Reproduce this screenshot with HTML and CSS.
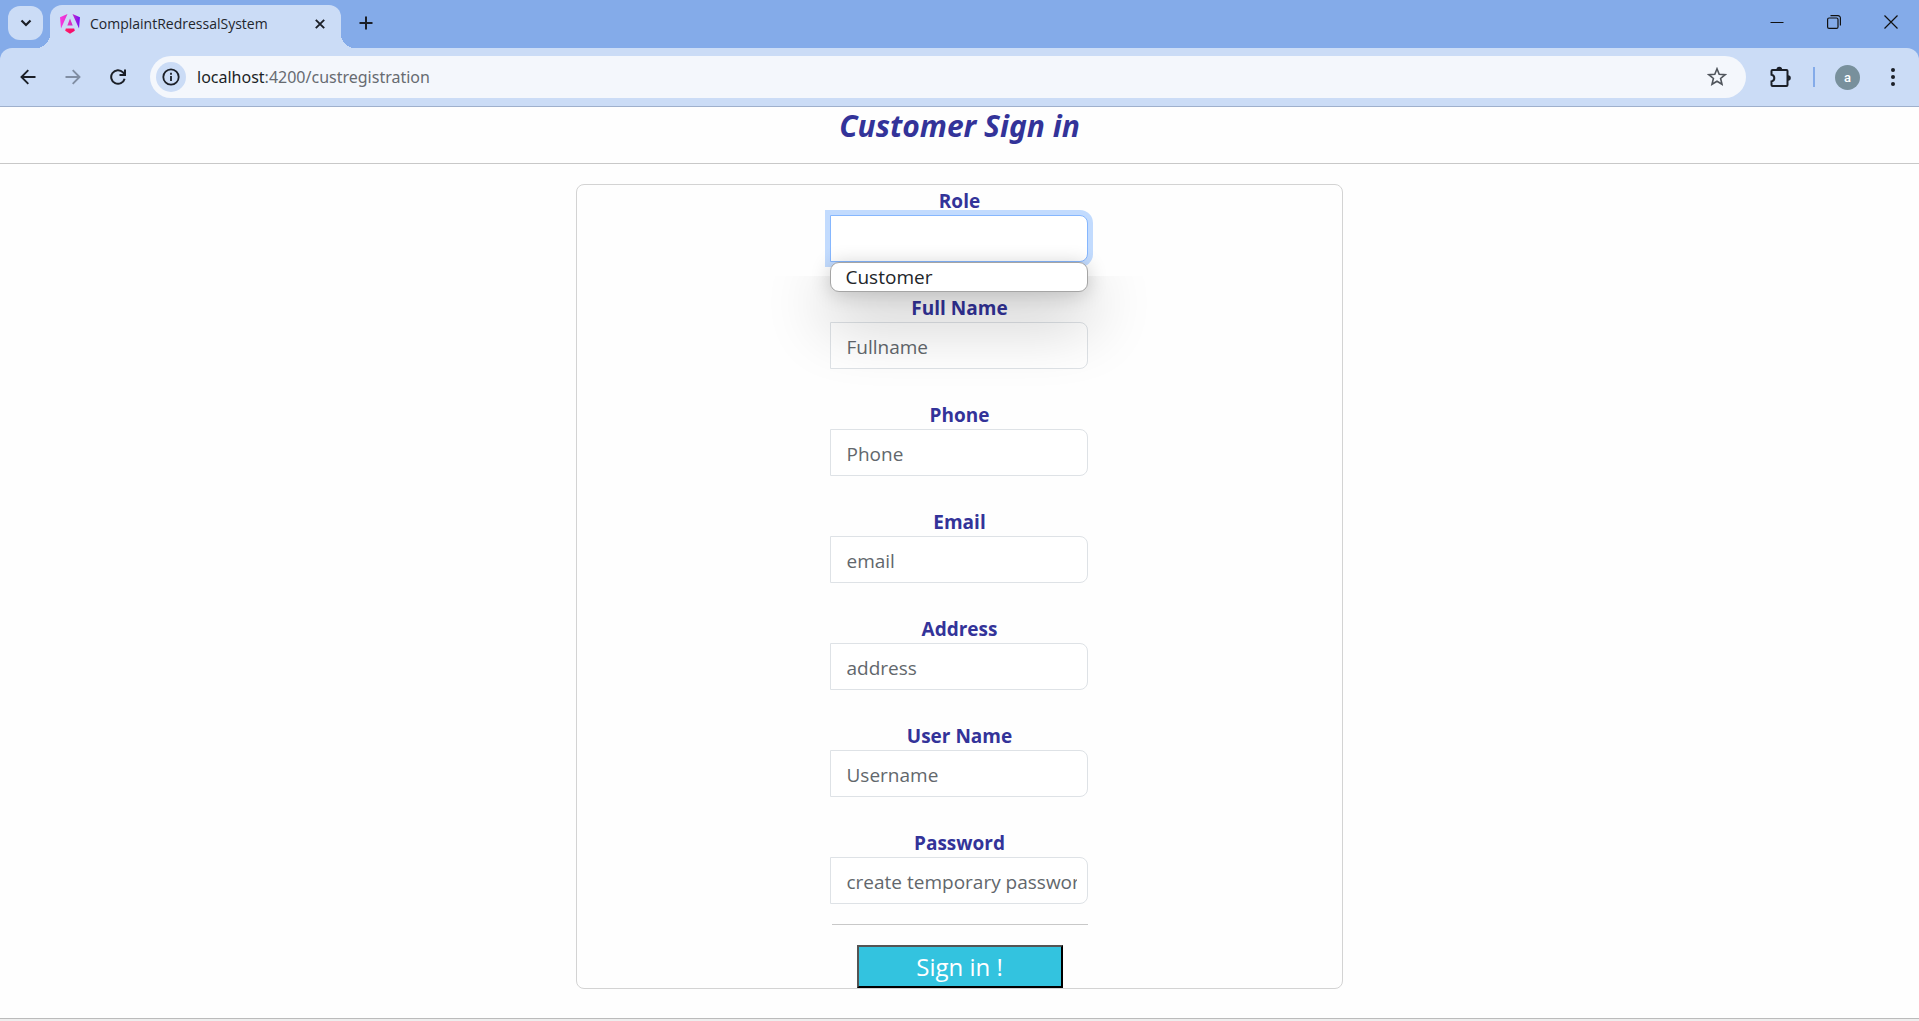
FILE: index.html
```html
<!DOCTYPE html>
<html lang="en">
<head>
<meta charset="utf-8">
<meta name="viewport" content="width=device-width, initial-scale=1">
<title>ComplaintRedressalSystem</title>
<link rel="stylesheet" href="styles.css">
</head>
<body>
<header class="browser">
  <div class="tab-strip">
    <button class="tab-search" aria-label="Search tabs"><svg width="12" height="8" viewBox="0 0 12 8"><path d="M1.5 1.5 6 6l4.500-4.500" fill="none" stroke="#1b1f27" stroke-width="2.200"/></svg></button>
    <div class="tab">
      <svg class="favicon" width="20" height="20" viewBox="0 0 20 20">
        <defs>
          <linearGradient id="ng" x1="0" y1="0" x2="1" y2="0"><stop offset="0" stop-color="#f637e3"/><stop offset=".5" stop-color="#e02fc0"/><stop offset="1" stop-color="#7410f5"/></linearGradient>
          <linearGradient id="nr" x1="0" y1="0" x2="1" y2="0"><stop offset="0" stop-color="#ff1f6a"/><stop offset="1" stop-color="#f4066b"/></linearGradient>
        </defs>
        <path d="M7.500 0 0 3.200l1 11.300zM12.500 0 20 3.200l-1 11.300zM10 4.500 7.300 11.500h5.400z" fill="url(#ng)"/>
        <path d="M5.800 14.500h8.400l.6 2.300L10 19.800l-4.800-3z" fill="url(#nr)"/>
      </svg>
      <span class="tab-title">ComplaintRedressalSystem</span>
      <button class="tab-close" aria-label="Close tab"><svg width="10" height="10" viewBox="0 0 10 10"><path d="m.8.8 8.400 8.400M9.200.8.8 9.200" stroke="#1b1f27" stroke-width="1.900"/></svg></button>
    </div>
    <button class="new-tab" aria-label="New tab"><svg width="14" height="14" viewBox="0 0 14 14"><path d="M7 .5v13M.5 7h13" stroke="#1b1f27" stroke-width="2"/></svg></button>
    <div class="window-buttons">
      <button aria-label="Minimize"><svg width="14" height="14" viewBox="0 0 14 14"><path d="M.5 7.500h13" stroke="#111"/></svg></button>
      <button aria-label="Restore"><svg width="14" height="14" viewBox="0 0 14 14" fill="none" stroke="#111" stroke-width="1.200"><rect x=".6" y="3" width="10.400" height="10.400" rx="1.500"/><path d="M3.500 .7H11a2.400 2.400 0 0 1 2.400 2.400v7.500"/></svg></button>
      <button aria-label="Close"><svg width="14" height="14" viewBox="0 0 14 14"><path d="m.5.5 13 13M13.500.5l-13 13" stroke="#111" stroke-width="1.200"/></svg></button>
    </div>
  </div>
  <div class="toolbar">
    <button class="nav-button" aria-label="Back"><svg width="16" height="16" viewBox="0 0 16 16" fill="none" stroke="#1b1f27" stroke-width="1.900"><path d="M15.500 8H2M8.300 1.200 1.500 8l6.800 6.800"/></svg></button>
    <button class="nav-button" aria-label="Forward"><svg width="16" height="16" viewBox="0 0 16 16" fill="none" stroke="#818ea3" stroke-width="1.900"><path d="M.5 8H14M7.700 1.200 14.500 8l-6.800 6.800"/></svg></button>
    <button class="nav-button" aria-label="Reload"><svg width="16" height="16" viewBox="0 0 16 16" fill="none" stroke="#1b1f27" stroke-width="2"><path d="M14.600 9.700A6.800 6.800 0 1 1 13 3.400L15 5.600M15 .4v5.500H9.500"/></svg></button>
    <div class="address-bar">
      <button class="site-info" aria-label="Site information"><svg width="18" height="18" viewBox="0 0 18 18"><circle cx="9" cy="9" r="7.700" fill="none" stroke="#1b1f27" stroke-width="1.800"/><path d="M9 8v5M9 4.800v1.900" stroke="#1b1f27" stroke-width="1.800"/></svg></button>
      <a class="url" href="#registration"><span class="url-host">localhost</span>:4200/custregistration</a>
      <button class="bookmark" aria-label="Bookmark this tab"><svg width="20" height="20" viewBox="0 0 20 20"><path d="m10 1.800 2.200 5.400 5.900.5-4.500 3.800 1.400 5.800L10 14.200l-5 3.100 1.400-5.800-4.500-3.800 5.900-.5z" fill="none" stroke="#50555c" stroke-width="1.600"/></svg></button>
    </div>
    <div class="actions">
      <button aria-label="Extensions"><svg width="22" height="22" viewBox="0 0 22 22"><path d="M3 4h13.500q1 0 1 1v14q0 1-1 1H2.500q-1 0-1-1v-3.600a3.400 3.400 0 0 0 0-6.700V5q0-1 1-1z" fill="none" stroke="#1b1f27" stroke-width="2"/><path d="M6.500 3.500a2.800 2.800 0 0 1 5.600 0zM18 9.200a2.800 2.800 0 0 1 0 5.600z" fill="#1b1f27"/></svg></button>
      <span class="divider"></span>
      <button class="avatar" aria-label="Profile">a</button>
      <button aria-label="Menu"><svg width="6" height="20" viewBox="0 0 6 20" fill="#1b1f27"><circle cx="3" cy="3" r="2"/><circle cx="3" cy="10" r="2"/><circle cx="3" cy="17" r="2"/></svg></button>
    </div>
  </div>
</header>
<main class="page">
  <h1 class="heading">Customer Sign in</h1>
  <hr class="rule">
  <form class="card" id="registration">
    <div class="fields">
      <div class="field">
        <label for="role">Role</label>
        <input class="control focused" id="role" type="text" autocomplete="off" role="combobox" aria-expanded="true" aria-controls="role-options">
        <ul class="options" id="role-options" role="listbox"><li role="option">Customer</li></ul>
      </div>
      <div class="field"><label for="fullname">Full Name</label><input class="control" id="fullname" type="text" placeholder="Fullname"></div>
      <div class="field"><label for="phone">Phone</label><input class="control" id="phone" type="tel" placeholder="Phone"></div>
      <div class="field"><label for="email">Email</label><input class="control" id="email" type="email" placeholder="email"></div>
      <div class="field"><label for="address">Address</label><input class="control" id="address" type="text" placeholder="address"></div>
      <div class="field"><label for="username">User Name</label><input class="control" id="username" type="text" placeholder="Username"></div>
      <div class="field"><label for="password">Password</label><input class="control" id="password" type="password" placeholder="create temporary password"></div>
    </div>
    <hr class="form-rule">
    <button class="submit" type="button">Sign in !</button>
  </form>
</main>
<footer class="footer"></footer>
</body>
</html>
```

FILE: styles.css
```css
* {
  box-sizing: border-box;
}

body {
  margin: 0;
  min-height: 100vh;
  display: flex;
  flex-direction: column;
  background: #fefefe;
  color: #212529;
  font-family: "Open Sans", "Noto Sans", sans-serif;
}

button {
  display: flex;
  align-items: center;
  justify-content: center;
  padding: 0;
  border: 0;
  background: none;
  font-family: inherit;
}

/* Browser window */
.browser {
  background: #84abe9;
  border-bottom: 1px solid #9fb0cc;
}

.tab-strip {
  height: 48px;
  display: flex;
  align-items: center;
  padding-left: 8px;
}

.tab-search {
  width: 35px;
  height: 34px;
  margin-top: -2px;
  border-radius: 12px;
  background: #cbdcf6;
}

.tab {
  position: relative;
  align-self: flex-end;
  width: 291px;
  height: 43px;
  margin-left: 7px;
  padding: 0 16px 6px 10px;
  display: flex;
  align-items: center;
  border-radius: 12px 12px 0 0;
  background: #cbdcf6;
}

.tab::before,
.tab::after {
  content: "";
  position: absolute;
  bottom: 0;
  width: 14px;
  height: 14px;
}

.tab::before {
  right: 100%;
  background: radial-gradient(circle at 0 0, transparent 14px, #cbdcf6 14px);
}

.tab::after {
  left: 100%;
  background: radial-gradient(circle at 100% 0, transparent 14px, #cbdcf6 14px);
}

.tab-title {
  margin-left: 10px;
  font-size: 14px;
  line-height: 20px;
  color: #22262d;
}

.tab-close {
  margin-left: auto;
}

.new-tab {
  width: 34px;
  height: 34px;
  margin: -2px 0 0 8px;
}

.window-buttons {
  display: flex;
  margin: -4px 0 0 auto;
}

.window-buttons button {
  width: 57px;
  height: 40px;
}

.toolbar {
  height: 58px;
  display: flex;
  align-items: center;
  padding: 0 23px 0 5px;
  border-radius: 12px 12px 0 0;
  background: #cbdcf6;
}

.nav-button {
  width: 45px;
  height: 40px;
}

.address-bar {
  flex: 1;
  height: 42px;
  margin-left: 10px;
  padding: 0 19px 0 6px;
  display: flex;
  align-items: center;
  border-radius: 21px;
  background: #f4f7fc;
}

.site-info {
  width: 30px;
  height: 30px;
  border-radius: 50%;
  background: #cbdcf6;
}

.url {
  margin-left: 11px;
  font-family: "Noto Sans", sans-serif;
  font-size: 16px;
  line-height: 24px;
  color: #676b71;
  text-decoration: none;
}

.url-host {
  color: #1b1f27;
}

.bookmark {
  margin-left: auto;
}

.actions {
  display: flex;
  align-items: center;
  margin-left: 24px;
}

.divider {
  width: 2px;
  height: 20px;
  margin: 0 20px 0 21px;
  background: #84abe9;
}

.avatar {
  width: 25px;
  height: 25px;
  margin-right: 30px;
  border-radius: 50%;
  background: #78909c;
  color: #fff;
  font: 500 13px Roboto, sans-serif;
}

/* Registration page */
.page {
  padding-bottom: 29px;
}

.heading {
  margin: 0;
  font-family: "Noto Sans", sans-serif;
  font-size: 30px;
  line-height: 38px;
  font-style: italic;
  font-weight: 700;
  text-align: center;
  color: #333399;
}

.rule {
  margin: 18px 0 20px;
  border: 0;
  border-top: 1px solid #c8c8c8;
}

.card {
  width: 40%;
  min-width: 300px;
  margin: 0 auto;
  display: flex;
  flex-direction: column;
  align-items: center;
  border: 1px solid #d3d3d3;
  border-radius: 8px;
}

.fields {
  width: 258px;
  margin-right: 2px;
  display: grid;
  gap: 30px;
}

.field {
  position: relative;
  display: flex;
  flex-direction: column;
}

.field label {
  padding: 2px 0 0 2px;
  font-size: 19px;
  line-height: 28px;
  font-weight: 700;
  text-align: center;
  color: #333399;
}

.control {
  width: 100%;
  height: 47px;
  padding: 2px 10px 0 16px;
  border: 1px solid #dee2e6;
  border-radius: 0 8px 8px 0;
  outline: 0;
  background: #fff;
  color: #212529;
  font-family: inherit;
  font-size: 19px;
}

.control::placeholder {
  color: #62676c;
  opacity: 1;
}

.focused {
  border-color: #86b7fe;
  box-shadow: 0 0 0 5px #c2dbfe;
}

.options {
  position: absolute;
  z-index: 1;
  top: 100%;
  left: 0;
  width: 100%;
  margin: 0;
  padding: 1px 15px 0;
  list-style: none;
  border: 1px solid #a5a5a5;
  border-radius: 9px;
  background: #fff;
  box-shadow: 0 2px 20px rgba(0, 0, 0, .2);
  font-size: 19px;
  line-height: 27px;
}

/* Wide drop shadow that only falls from the lower half of the list */
.options::after {
  content: "";
  position: absolute;
  inset: -1px;
  border-radius: 9px;
  box-shadow: 0 26px 64px 4px rgba(0, 0, 0, .24);
  clip-path: inset(14px -90px -120px);
  pointer-events: none;
}

.form-rule {
  width: 256px;
  margin: 20px 0;
  border: 0;
  border-top: 1px solid #c8c8c8;
}

.submit {
  width: 206px;
  height: 43px;
  border: 2px outset #000;
  background: #33c3df;
  color: #fff;
  font-size: 24px;
}

.footer {
  flex: 1;
  border-top: 1px solid #bbb;
  background: #eee;
}
```
